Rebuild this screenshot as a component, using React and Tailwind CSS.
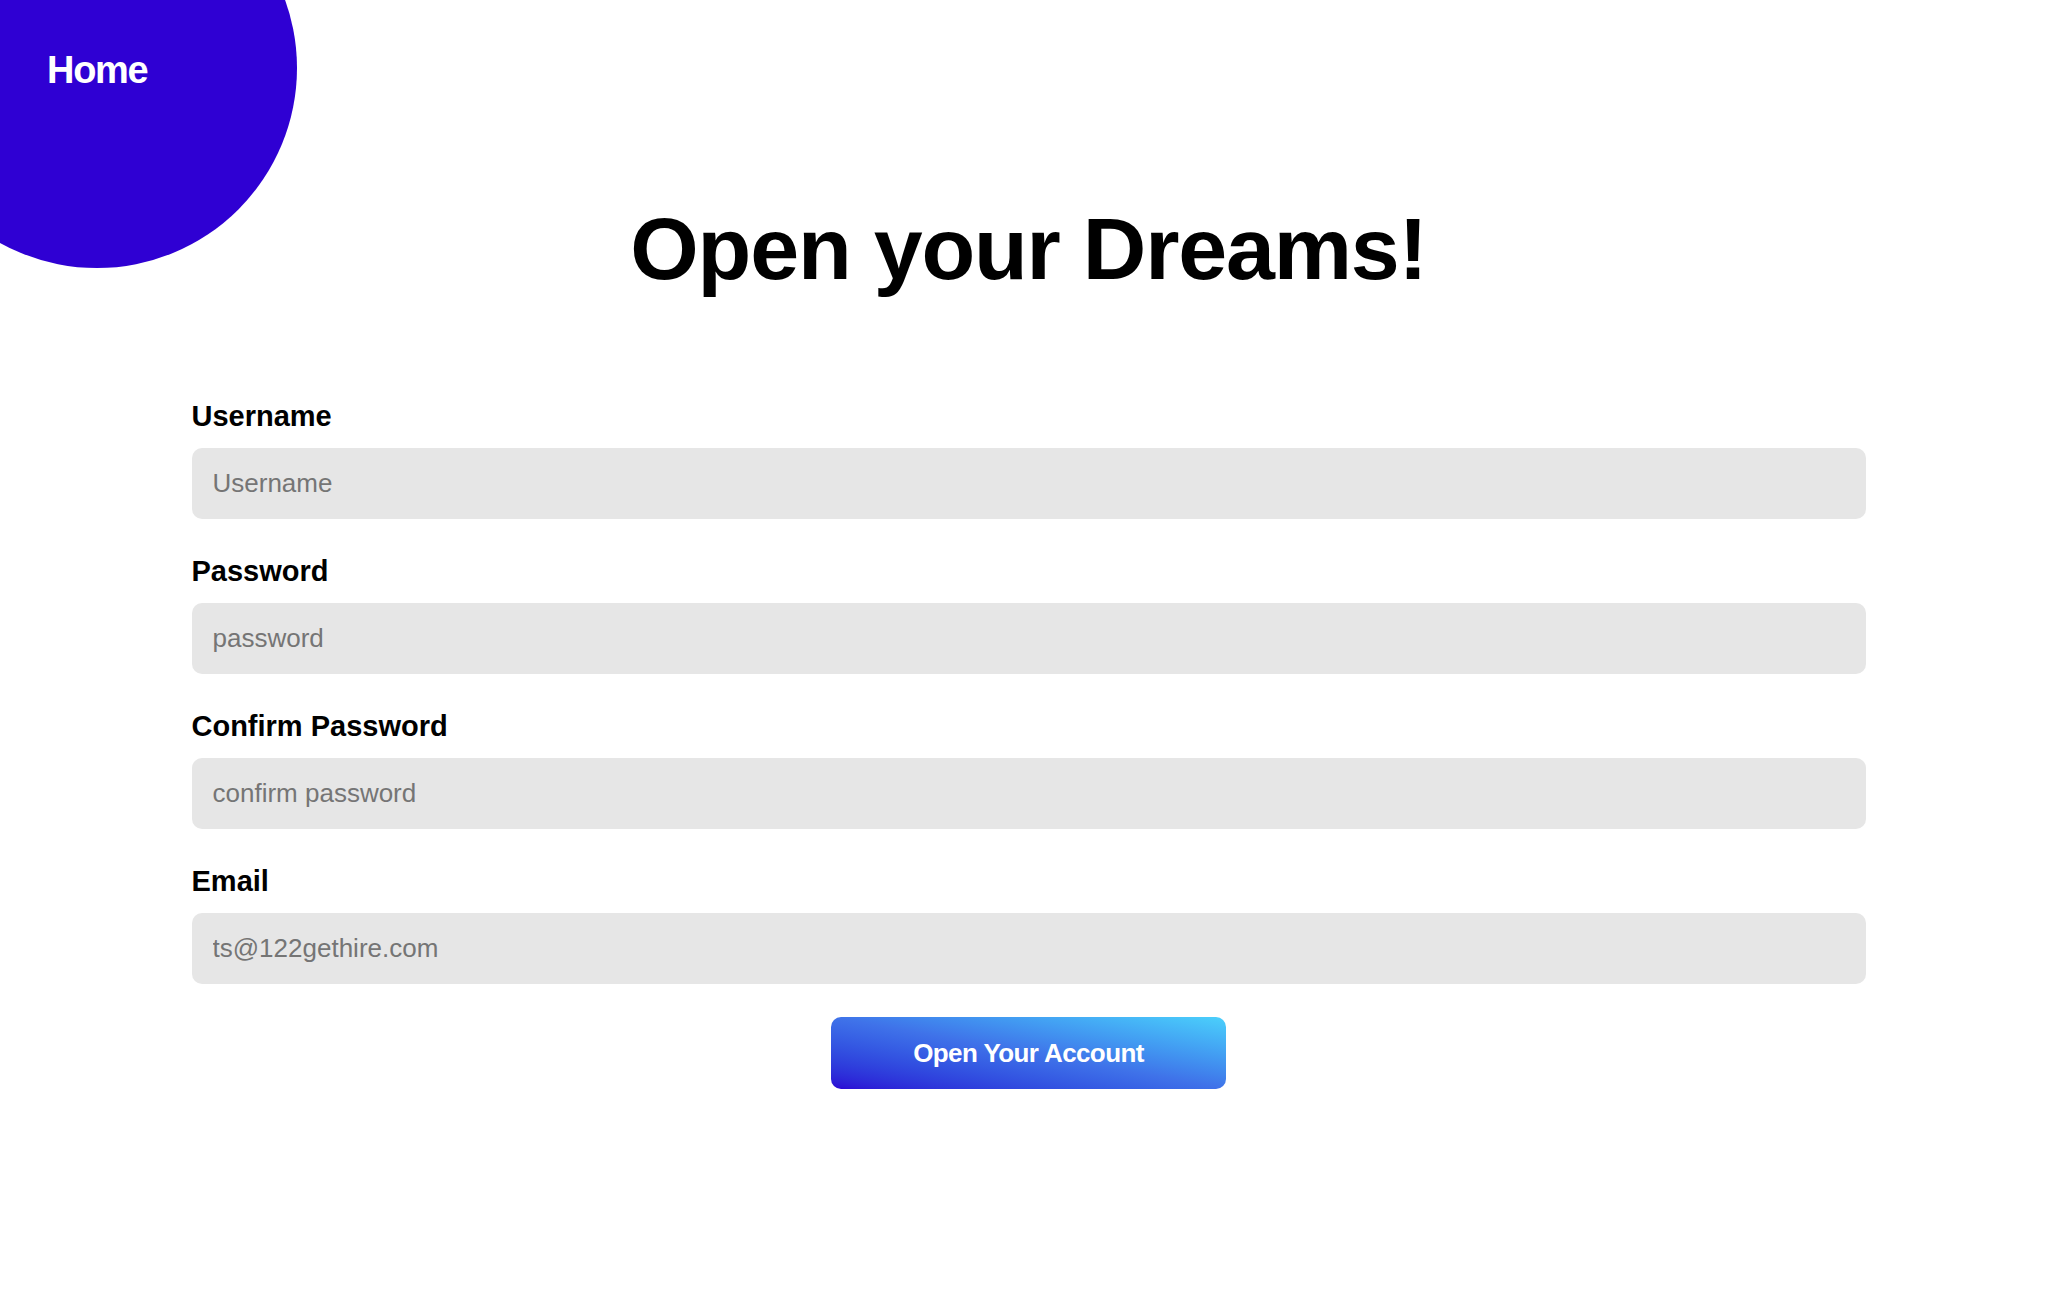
import { useState } from 'react';

const fields = [
    { id: 'username', label: 'Username', placeholder: 'Username', type: 'text' },
    { id: 'password', label: 'Password', placeholder: 'password', type: 'password' },
    { id: 'confirm', label: 'Confirm Password', placeholder: 'confirm password', type: 'password' },
    { id: 'email', label: 'Email', placeholder: 'ts@122gethire.com', type: 'email' },
];

const SignupPage = () => {
    const [form, setForm] = useState({ username: '', password: '', confirm: '', email: '' });

    const update = (id) => (e) => setForm({ ...form, [id]: e.target.value });

    return (
        <div className="relative min-h-screen overflow-hidden bg-white text-black font-['Liberation_Sans',Arial,sans-serif]">
            {/* Home bubble */}
            <div className="absolute -left-[103px] -top-[132px] w-[400px] h-[400px] rounded-full bg-[#2f00d3]" />
            <a href="#" className="absolute left-[47px] top-[51px] text-[38px] leading-none font-bold tracking-[-1.3px] text-white">
                Home
            </a>

            <div className="pl-[12px] pt-[205px] pb-[120px]">
                <div className="mx-auto w-[1674px] flex flex-col">
                    <h1 className="text-center text-[88px] leading-none font-bold tracking-[-1.2px]">
                        Open your Dreams!
                    </h1>

                    <form className="mt-[107px] flex flex-col gap-[36px]" onSubmit={(e) => e.preventDefault()}>
                        {fields.map((f) => (
                            <div key={f.id} className="flex flex-col">
                                <label htmlFor={f.id} className="h-[33px] mb-[15px] text-[29px] leading-[33px] font-bold">
                                    {f.label}
                                </label>
                                <input
                                    id={f.id}
                                    type={f.type}
                                    value={form[f.id]}
                                    onChange={update(f.id)}
                                    placeholder={f.placeholder}
                                    className="h-[71px] w-full rounded-[10px] bg-[#e6e6e6] px-[21px] text-[26px] text-[#333] placeholder:text-[#757575] outline-none"
                                />
                            </div>
                        ))}
                    </form>

                    <button
                        type="button"
                        className="mt-[33px] mx-auto h-[72px] w-[395px] rounded-[10px] bg-gradient-to-tr from-[#2c00d4] via-[#3f72e9] to-[#4bd0fb] text-[26px] font-bold tracking-[-0.6px] text-white"
                    >
                        Open Your Account
                    </button>
                </div>
            </div>
        </div>
    );
};

export default SignupPage;
